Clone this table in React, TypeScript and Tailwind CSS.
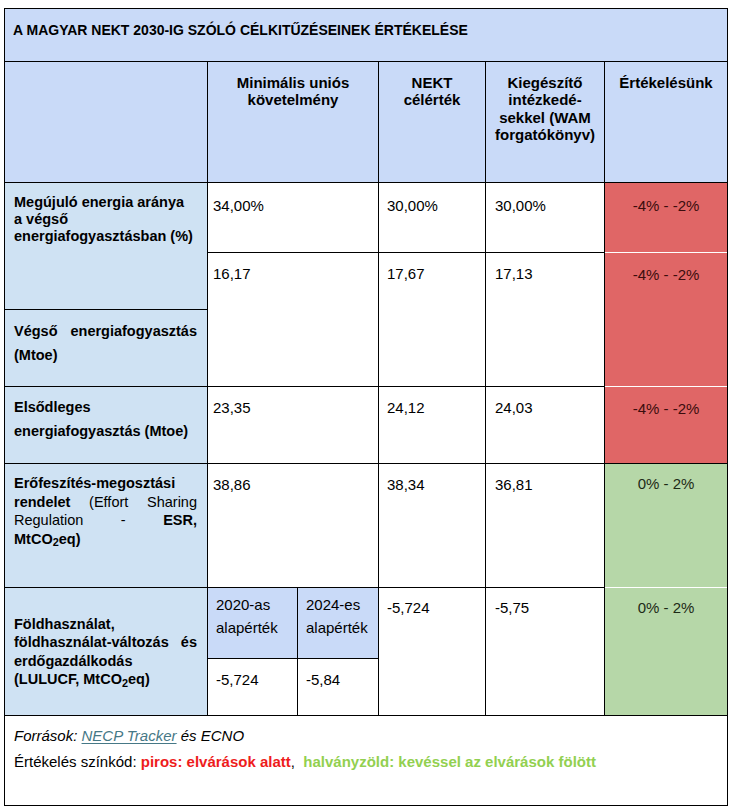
const HEAD = 'bg-[#c9daf8]'
const LABEL = 'bg-[#cfe2f3]'
const RED = 'bg-[#e06666] text-[#3b0d0d]'
const GREEN = 'bg-[#b6d7a8] text-[#1d2a16]'

// one justified line, spread edge to edge like the Word table
function JLine({ children }: { children: React.ReactNode }) {
  return <span className="block whitespace-nowrap text-justify [text-align-last:justify]">{children}</span>
}

export default function App() {
  return (
    <div className="min-h-[810px] bg-white pl-1 pt-2 font-['Liberation_Sans',Arial,sans-serif] text-[15px] leading-[17.25px] text-black">
      <div className="grid w-[724px] grid-cols-[202px_170px_106px_118px_122px] grid-rows-[52px_120px_69px_56px_76px_76px_123px_127px_89px] gap-px border border-black bg-black">
        {/* title */}
        <div className={`col-span-5 ${HEAD} pl-2 pt-[13px] text-[14px] font-bold`}>
          A MAGYAR NEKT 2030-IG SZÓLÓ CÉLKITŰZÉSEINEK ÉRTÉKELÉSE
        </div>

        {/* header row */}
        <div className={HEAD} />
        <div className={`${HEAD} pt-3 text-center font-bold`}>
          Minimális uniós
          <br />
          követelmény
        </div>
        <div className={`${HEAD} pt-3 text-center font-bold`}>
          NEKT
          <br />
          célérték
        </div>
        <div className={`${HEAD} whitespace-nowrap pt-3 text-center font-bold`}>
          Kiegészítő
          <br />
          intézkedé-
          <br />
          sekkel (WAM
          <br />
          forgatókönyv)
        </div>
        <div className={`${HEAD} pt-3 text-center font-bold`}>Értékelésünk</div>

        {/* megújuló */}
        <div className={`row-span-2 ${LABEL} whitespace-nowrap pl-[9px] pt-[11px] text-[14.5px] font-bold leading-[16.75px]`}>
          Megújuló energia aránya
          <br />
          a végső
          <br />
          energiafogyasztásban (%)
        </div>
        <div className="bg-white pl-[5px] pt-[14px]">34,00%</div>
        <div className="bg-white pl-2 pt-[14px]">30,00%</div>
        <div className="bg-white pl-[9px] pt-[14px]">30,00%</div>
        <div className={`${RED} pt-[14px] text-center`}>-4% - -2%</div>

        {/* végső energiafogyasztás */}
        <div className="row-span-2 bg-white pl-[5px] pt-3">16,17</div>
        <div className="row-span-2 bg-white pl-2 pt-3">17,67</div>
        <div className="row-span-2 bg-white pl-[9px] pt-3">17,13</div>
        <div className={`row-span-2 -mt-px border-t border-white ${RED} pt-[13px] text-center`}>-4% - -2%</div>
        <div className={`${LABEL} pl-[9px] pr-[10px] pt-[10px] text-[14.5px] font-bold leading-[23.5px]`}>
          <JLine>Végső energiafogyasztás</JLine>
          (Mtoe)
        </div>

        {/* elsődleges */}
        <div className={`${LABEL} whitespace-nowrap pl-[9px] pt-2 text-[14.5px] font-bold leading-[24px]`}>
          Elsődleges
          <br />
          energiafogyasztás (Mtoe)
        </div>
        <div className="bg-white pl-[5px] pt-3">23,35</div>
        <div className="bg-white pl-2 pt-3">24,12</div>
        <div className="bg-white pl-[9px] pt-3">24,03</div>
        <div className={`-mt-px border-t border-white ${RED} pt-[13px] text-center`}>-4% - -2%</div>

        {/* ESR */}
        <div className={`${LABEL} pl-[9px] pr-[10px] pt-[10px] text-[14.5px] leading-[18.5px]`}>
          <span className="block font-bold">Erőfeszítés-megosztási</span>
          <JLine>
            <b>rendelet</b> (Effort Sharing
          </JLine>
          <JLine>
            Regulation - <b>ESR,</b>
          </JLine>
          <b>
            MtCO<sub>2</sub>eq)
          </b>
        </div>
        <div className="bg-white pl-[5px] pt-3">38,86</div>
        <div className="bg-white pl-2 pt-3">38,34</div>
        <div className="bg-white pl-[9px] pt-3">36,81</div>
        <div className={`${GREEN} pt-[11px] text-center`}>0% - 2%</div>

        {/* LULUCF */}
        <div className={`flex items-center ${LABEL} pl-[9px] pr-[10px] text-[14.5px] font-bold leading-[18.5px]`}>
          <div className="w-full">
            Földhasználat,
            <JLine>földhasználat-változás és</JLine>
            erdőgazdálkodás
            <br />
            (LULUCF, MtCO<sub>2</sub>eq)
          </div>
        </div>
        <div className="grid grid-cols-[89px_80px] grid-rows-[70px_56px] gap-px bg-black">
          <div className={`${HEAD} pl-2 pt-[6px] leading-[22.5px]`}>
            2020-as
            <br />
            alapérték
          </div>
          <div className={`${HEAD} pl-2 pt-[6px] leading-[22.5px]`}>
            2024-es
            <br />
            alapérték
          </div>
          <div className="bg-white pl-2 pt-3">-5,724</div>
          <div className="bg-white pl-2 pt-3">-5,84</div>
        </div>
        <div className="bg-white pl-2 pt-[11px]">-5,724</div>
        <div className="bg-white pl-[9px] pt-[11px]">-5,75</div>
        <div className={`-mt-px border-t border-white ${GREEN} pt-[11px] text-center`}>0% - 2%</div>

        {/* footer */}
        <div className="col-span-5 bg-white pl-[9px] pt-[11px]">
          <p className="italic">
            Források:{' '}
            <a href="#" className="text-[#467886] underline underline-offset-2">
              NECP Tracker
            </a>{' '}
            és ECNO
          </p>
          <p className="mt-[9px]">
            Értékelés színkód: <b className="text-[#ee1c1c]">piros: elvárások alatt</b>,{'\u00a0 '}
            <b className="text-[#92d050]">halványzöld: kevéssel az elvárások fölött</b>
          </p>
        </div>
      </div>
    </div>
  )
}
